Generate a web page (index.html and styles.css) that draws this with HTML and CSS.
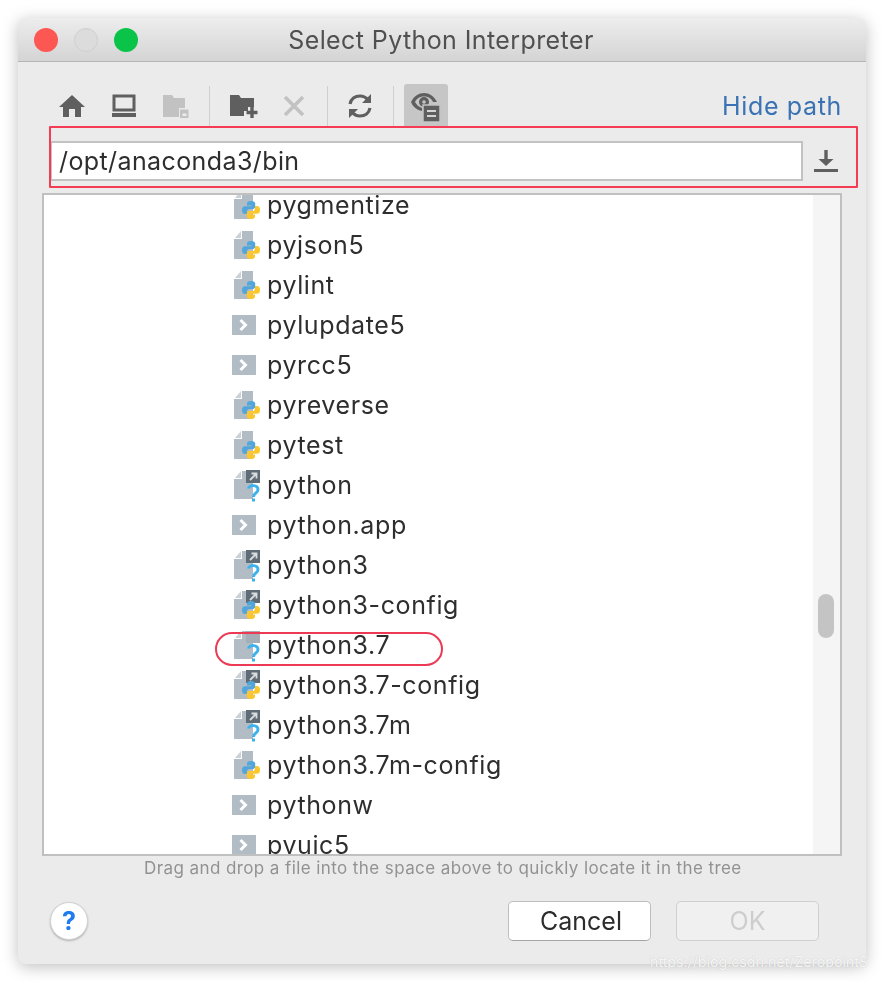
FILE: index.html
```html
<!DOCTYPE html>
<html lang="en">
<head>
<meta charset="utf-8">
<title>Select Python Interpreter</title>
<link rel="stylesheet" href="styles.css">
</head>
<body>
<svg class="defs" width="0" height="0">
  <defs>
    <g id="file"><path d="M10 1H21V29H2V9H10Z" fill="#b2bcc4"/><path d="M9 1V8H3Z" fill="#cad1d7"/></g>
    <g id="logo">
      <path d="M9 0C6 0 5 1 5 2.5V4.5H9.5V5.2H3C1 5.2 0 6.8 0 9C0 11.4 1 13 3 13H5V10.6C5 9 6 8 7.6 8H11C12.4 8 13.2 7 13.2 5.8V2.5C13.2 1 11.8 0 9 0Z" fill="#52a6dc"/>
      <path d="M9 18C12 18 13 17 13 15.500V13.500H8.500V12.800H15C17 12.800 18 11.200 18 9C18 6.600 17 5 15 5H13V7.400C13 9 12 10 10.400 10H7C5.600 10 4.800 11 4.800 12.200V15.500C4.800 17 6.200 18 9 18Z" fill="#fcc72c"/>
    </g>
    <g id="link"><rect x="14" y="0" width="14" height="13" fill="#5f6b75"/><path d="M18 10L24.500 3.500M19.500 3.500H24.500V8.500" fill="none" stroke="#d9dde0" stroke-width="1.800"/></g>
    <path id="quest" d="M16.500 18.500C17 14.500 26 14.500 26 19.500C26 23.500 21.500 22.500 21.500 27M21.500 28.500V31.500" fill="none" stroke="#3fb2ee" stroke-width="3"/>
    <symbol id="i-py" viewBox="0 0 28 32" overflow="visible"><use href="#file"/><use href="#logo" x="10" y="11"/></symbol>
    <symbol id="i-ex" viewBox="0 0 28 32"><rect x="0" y="5" width="24" height="20" fill="#b2bcc4"/><path d="M8.500 10L13.500 15L8.500 20" fill="none" stroke="#fff" stroke-width="3"/></symbol>
    <symbol id="i-q" viewBox="0 0 28 32" overflow="visible"><use href="#file"/><use href="#link"/><use href="#quest"/></symbol>
    <symbol id="i-q7" viewBox="0 0 28 32" overflow="visible"><use href="#file"/><rect x="14" y="1" width="14" height="12" fill="#a5aeb6"/><use href="#quest"/></symbol>
    <symbol id="i-lp" viewBox="0 0 28 32" overflow="visible"><use href="#file"/><use href="#link"/><use href="#logo" x="10" y="11"/></symbol>
  </defs>
</svg>

<main class="window">
  <header class="titlebar">
    <div class="lights">
      <span class="light light-red"></span>
      <span class="light light-off"></span>
      <span class="light light-green"></span>
    </div>
    <h1 class="title">Select Python Interpreter</h1>
  </header>

  <div class="toolbar">
    <span class="tool"><svg width="28" height="24" viewBox="0 0 28 24"><path d="M14 1L1 13H5V23H11V15H17V23H23V13H27Z" fill="#5f5f5f"/></svg></span>
    <span class="tool"><svg width="26" height="24" viewBox="0 0 26 24"><path d="M3 2H23V16H3Z" fill="none" stroke="#5f5f5f" stroke-width="3"/><rect x="1" y="19" width="24" height="4" fill="#5f5f5f"/></svg></span>
    <span class="tool"><svg width="26" height="24" viewBox="0 0 26 24"><path d="M0 1H9L11 4H22V14H16V23H0Z" fill="#c2c2c2"/><path d="M17 15.500H25.500V24H17Z" fill="#c2c2c2"/><rect x="19.500" y="19.500" width="4" height="2.500" fill="#ececec"/></svg></span>
    <span class="sep"></span>
    <span class="tool"><svg class="tool-shift" width="28" height="24" viewBox="0 0 28 24"><path d="M0 1H9L11 4H24V13H18V17H14V22H0Z" fill="#5f5f5f"/><path d="M22 13V24M16.500 18.500H27.500" stroke="#5f5f5f" stroke-width="3.400" fill="none"/></svg></span>
    <span class="tool"><svg width="22" height="22" viewBox="0 0 22 22"><path d="M2 2L20 20M20 2L2 20" stroke="#c2c2c2" stroke-width="3.600" fill="none"/></svg></span>
    <span class="sep"></span>
    <span class="tool"><svg width="26" height="26" viewBox="0 0 26 26"><path d="M3 11C4 6 8 3 13 3C17 3 19.500 5 21 7M23 15C22 20 18 23 13 23C9 23 6.500 21 5 19" fill="none" stroke="#5f5f5f" stroke-width="3.200"/><path d="M24 1V10H15Z M2 25V16H11Z" fill="#5f5f5f"/></svg></span>
    <span class="sep"></span>
    <span class="tool tool-active"><svg width="32" height="32" viewBox="0 0 32 32"><path d="M1 12C4 6 9 3 14 3C19 3 24 6 27 12H23C21 8 18 6.500 14 6.500C10 6.500 7 8 5 12C6.500 15 9 17 12 18V21C7 20 3 17 1 12Z" fill="#5f5f5f"/><circle cx="14" cy="12" r="5" fill="#5f5f5f"/><circle cx="14" cy="12" r="1.800" fill="#c4c4c4"/><rect x="13" y="15" width="17" height="17" fill="#5f5f5f" stroke="#c4c4c4" stroke-width="1.500"/><path d="M17 21H26M17 26H26" stroke="#d5d5d5" stroke-width="2.200"/></svg></span>
    <a class="hide-path">Hide path</a>
  </div>

  <div class="path-row">
    <div class="path-field">/opt/anaconda3/bin</div>
    <svg class="download" width="24" height="24" viewBox="0 0 24 24"><path d="M12 1V13" stroke="#5f5f5f" stroke-width="3.400" fill="none"/><path d="M4.500 10H19.500L12 17Z" fill="#5f5f5f"/><rect x="0" y="20" width="24" height="3" fill="#5f5f5f"/></svg>
  </div>

  <section class="tree">
    <ul class="list">
      <li class="row"><svg class="icon"><use href="#i-py"/></svg>pygmentize</li>
      <li class="row"><svg class="icon"><use href="#i-py"/></svg>pyjson5</li>
      <li class="row"><svg class="icon"><use href="#i-py"/></svg>pylint</li>
      <li class="row"><svg class="icon"><use href="#i-ex"/></svg>pylupdate5</li>
      <li class="row"><svg class="icon"><use href="#i-ex"/></svg>pyrcc5</li>
      <li class="row"><svg class="icon"><use href="#i-py"/></svg>pyreverse</li>
      <li class="row"><svg class="icon"><use href="#i-py"/></svg>pytest</li>
      <li class="row"><svg class="icon"><use href="#i-q"/></svg>python</li>
      <li class="row"><svg class="icon"><use href="#i-ex"/></svg>python.app</li>
      <li class="row"><svg class="icon"><use href="#i-q"/></svg>python3</li>
      <li class="row"><svg class="icon"><use href="#i-lp"/></svg>python3-config</li>
      <li class="row"><svg class="icon"><use href="#i-q7"/></svg>python3.7<span class="ellipse"></span></li>
      <li class="row"><svg class="icon"><use href="#i-lp"/></svg>python3.7-config</li>
      <li class="row"><svg class="icon"><use href="#i-q"/></svg>python3.7m</li>
      <li class="row"><svg class="icon"><use href="#i-py"/></svg>python3.7m-config</li>
      <li class="row"><svg class="icon"><use href="#i-ex"/></svg>pythonw</li>
      <li class="row"><svg class="icon"><use href="#i-ex"/></svg>pyuic5</li>
    </ul>
    <div class="track"><div class="thumb"></div></div>
  </section>

  <p class="hint">Drag and drop a file into the space above to quickly locate it in the tree</p>

  <footer class="footer">
    <button class="help">?</button>
    <button class="btn btn-cancel">Cancel</button>
    <button class="btn btn-ok">OK</button>
  </footer>

  <div class="highlight"></div>
</main>

<div class="watermark">https://blog.csdn.net/ZeropointS</div>
</body>
</html>
```

FILE: styles.css
```css
* { box-sizing: border-box; }

html, body { margin: 0; height: 100%; }

body {
  padding: 18px;
  background: #fff;
  overflow: hidden;
  font-family: Inter, "Liberation Sans", sans-serif;
  color: #333;
}

.defs { position: absolute; }

.window {
  position: relative;
  width: 848px;
  height: 946px;
  border-radius: 8px;
  background: #ebebeb;
  box-shadow: 0 3px 16px rgba(0, 0, 0, .25);
  filter: blur(.7px);
}

.titlebar {
  display: flex;
  align-items: center;
  height: 44px;
  padding-left: 16px;
  border-radius: 8px 8px 0 0;
  border-bottom: 1px solid #b5b5b5;
  background: linear-gradient(#ededed, #d4d4d4);
  position: relative;
}

.lights { display: flex; gap: 16px; }

.light { width: 24px; height: 24px; border-radius: 50%; }
.light-red { background: #fc5753; }
.light-off { background: #dcdcdc; border: 1px solid #cfcfcf; }
.light-green { background: #0ac44a; }

.title {
  flex: 1;
  margin: 0 0 0 -122px;
  text-align: center;
  font-size: 25px;
  font-weight: 400;
  letter-spacing: .4px;
  color: #505050;
}

.toolbar {
  display: flex;
  align-items: center;
  height: 44px;
  margin-top: 22px;
  padding: 0 24px 0 28px;
}

.tool {
  display: flex;
  align-items: center;
  justify-content: center;
  width: 52px;
  height: 44px;
}

.tool-shift { margin-left: 3px; }

.tool-active {
  width: 44px;
  margin-left: 4px;
  border-radius: 3px;
  background: #c6c6c6;
}

.sep {
  width: 1px;
  height: 40px;
  margin: 0 6px 0 7px;
  background: #cfcfcf;
}

.hide-path {
  margin-left: auto;
  font-size: 25px;
  letter-spacing: .65px;
  color: #3a72b4;
}

.path-row {
  display: flex;
  align-items: center;
  margin-top: 13px;
  padding-left: 32px;
}

.path-field {
  display: flex;
  align-items: center;
  width: 753px;
  height: 40px;
  padding-left: 7px;
  border: 2px solid #c2c2c2;
  background: #fff;
  font-size: 25px;
  letter-spacing: .4px;
  color: #2e2e2e;
}

.download { margin-left: 11px; }

.tree {
  display: flex;
  width: 800px;
  height: 663px;
  margin: 12px 0 0 24px;
  border: 2px solid #c0c0c0;
  background: #fff;
  overflow: hidden;
}

.list {
  flex: 1;
  margin: -9px 0 0;
  padding: 0;
  list-style: none;
}

.row {
  position: relative;
  display: flex;
  align-items: center;
  gap: 7px;
  height: 40px;
  padding: 0 0 2px 188px;
  font-size: 25px;
  letter-spacing: .6px;
  color: #2e2e2e;
  white-space: nowrap;
}

.icon { width: 28px; height: 32px; margin-top: 2px; overflow: visible; }

.ellipse {
  position: absolute;
  left: 171px;
  top: 6px;
  width: 228px;
  height: 34px;
  border: 2px solid #ec3a55;
  border-radius: 17px;
}

.track {
  width: 27px;
  padding: 399px 0 0 5px;
  background: #f5f5f5;
}

.thumb {
  width: 16px;
  height: 44px;
  border-radius: 8px;
  background: #c4c4c4;
}

.hint {
  height: 24px;
  margin: 0;
  padding-left: 126px;
  font-size: 17px;
  line-height: 24px;
  letter-spacing: .41px;
  color: #929292;
  white-space: nowrap;
}

.footer {
  display: flex;
  align-items: center;
  gap: 25px;
  height: 40px;
  margin-top: 21px;
  padding: 0 47px 0 32px;
}

.help {
  width: 38px;
  height: 38px;
  margin-right: auto;
  padding: 0;
  border: 1px solid #d2d2d2;
  border-radius: 50%;
  background: #fff;
  box-shadow: 0 1px 2px rgba(0, 0, 0, .25);
  font: 700 25px Inter, "Liberation Sans", sans-serif;
  color: #1f7cf0;
}

.btn {
  width: 143px;
  height: 40px;
  border-radius: 5px;
  font: 400 25px Inter, "Liberation Sans", sans-serif;
}

.btn-cancel {
  padding-left: 9px;
  border: 1px solid #bdbdbd;
  border-bottom-color: #a5a5a5;
  background: #fff;
  color: #2c2c2c;
}

.btn-ok {
  border: 1px solid #cfcfcf;
  background: #f0f0f0;
  color: #cdcdcd;
}

.highlight {
  position: absolute;
  left: 31px;
  top: 108px;
  width: 809px;
  height: 62px;
  border: 2px solid #f63c55;
  border-radius: 1px;
}

.watermark {
  position: absolute;
  left: 650px;
  top: 951px;
  font-size: 14.200px;
  line-height: 22px;
  color: rgba(255, 255, 255, .85);
  text-shadow: 0 0 1px rgba(170, 170, 170, .7);
  white-space: nowrap;
}
```
